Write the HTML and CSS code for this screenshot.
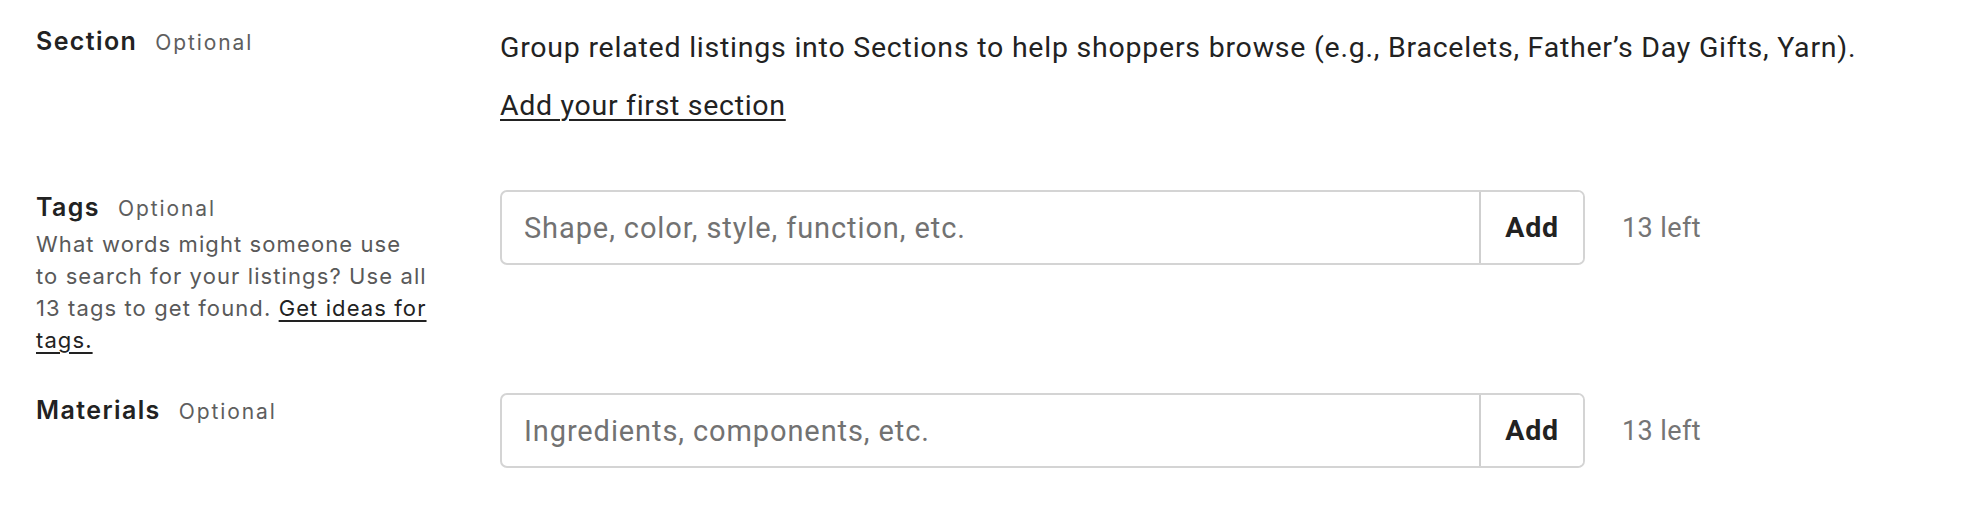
FILE: index.html
```html
<!DOCTYPE html>
<html lang="en">
<head>
<meta charset="utf-8">
<title>Listing details</title>
<link rel="stylesheet" href="styles.css">
</head>
<body>
<main class="form">
  <section class="field field-section">
    <div class="field-label">
      <div class="label-line"><span class="label">Section</span><span class="optional">Optional</span></div>
    </div>
    <div class="field-body">
      <p class="desc">Group related listings into Sections to help shoppers browse (e.g., Bracelets, Father’s Day Gifts, Yarn).</p>
      <a class="link-lg" href="#">Add your first section</a>
    </div>
  </section>

  <section class="field field-tags">
    <div class="field-label">
      <div class="label-line"><span class="label">Tags</span><span class="optional">Optional</span></div>
      <p class="helper">What words might someone use<br>to search for your listings? Use all<br>13 tags to get found. <a class="link-sm" href="#">Get ideas for<br>tags.</a></p>
    </div>
    <div class="field-body row">
      <div class="input-group">
        <input class="text-input" type="text" placeholder="Shape, color, style, function, etc.">
        <button class="add-btn" type="button">Add</button>
      </div>
      <span class="count">13 left</span>
    </div>
  </section>

  <section class="field field-materials">
    <div class="field-label">
      <div class="label-line"><span class="label">Materials</span><span class="optional">Optional</span></div>
    </div>
    <div class="field-body row">
      <div class="input-group">
        <input class="text-input" type="text" placeholder="Ingredients, components, etc.">
        <button class="add-btn" type="button">Add</button>
      </div>
      <span class="count">13 left</span>
    </div>
  </section>
</main>
</body>
</html>
```
FILE: styles.css
```css
html, body {
  margin: 0;
  padding: 0;
  background: #fff;
}

body {
  font-family: Inter, "Liberation Sans", sans-serif;
  color: #222;
}

.form {
  padding: 28px 0 0 36px;
}

.field {
  display: grid;
  grid-template-columns: 464px auto;
  align-items: start;
}

.field-tags {
  margin-top: 68px;
}

.field-materials {
  margin-top: 41px;
}

.label-line {
  display: flex;
  align-items: baseline;
  line-height: 27px;
}

.label {
  font-size: 25px;
  font-weight: 600;
  letter-spacing: 1.4px;
  color: #222;
}

.optional {
  margin-left: 18px;
  font-size: 21px;
  letter-spacing: 1.9px;
  color: #5e5e5e;
}

.helper {
  margin: 6px 0 0;
  width: 420px;
  font-size: 22px;
  line-height: 32px;
  letter-spacing: 1.1px;
  color: #595959;
}

.link-sm {
  color: #222;
  text-decoration: underline;
  text-underline-offset: 4px;
  text-decoration-thickness: 2px;
}

.desc,
.link-lg,
.add-btn {
  font-family: Roboto, "Liberation Sans", sans-serif;
  font-size: 28.5px;
  letter-spacing: 0.7px;
}

.desc {
  margin: 0;
  line-height: 40px;
  letter-spacing: 0.77px;
  color: #222;
}

.link-lg {
  display: inline-block;
  margin-top: 18px;
  line-height: 40px;
  color: #222;
  text-decoration: underline;
  text-underline-offset: 4px;
  text-decoration-thickness: 2px;
}

.field-tags .field-body,
.field-materials .field-body {
  margin-top: -4px;
}

.row {
  display: flex;
  align-items: center;
}

.input-group {
  display: flex;
  width: 1085px;
  height: 75px;
  box-sizing: border-box;
  border: 2px solid #d4d4d4;
  border-radius: 7px;
  overflow: hidden;
}

.text-input {
  flex: 1;
  min-width: 0;
  border: 0;
  outline: 0;
  padding: 0 0 0 22px;
  font-family: Roboto, "Liberation Sans", sans-serif;
  font-size: 29px;
  letter-spacing: 0.9px;
  color: #222;
  background: transparent;
}

.text-input::placeholder {
  color: #727272;
  opacity: 1;
}

.add-btn {
  width: 104px;
  border: 0;
  border-left: 2px solid #cfcfcf;
  background: #fff;
  font-weight: 700;
  color: #222;
  padding: 0;
  cursor: pointer;
}

.count {
  margin-left: 37px;
  font-family: Roboto, "Liberation Sans", sans-serif;
  font-size: 27px;
  letter-spacing: 0.4px;
  color: #757575;
}
```
